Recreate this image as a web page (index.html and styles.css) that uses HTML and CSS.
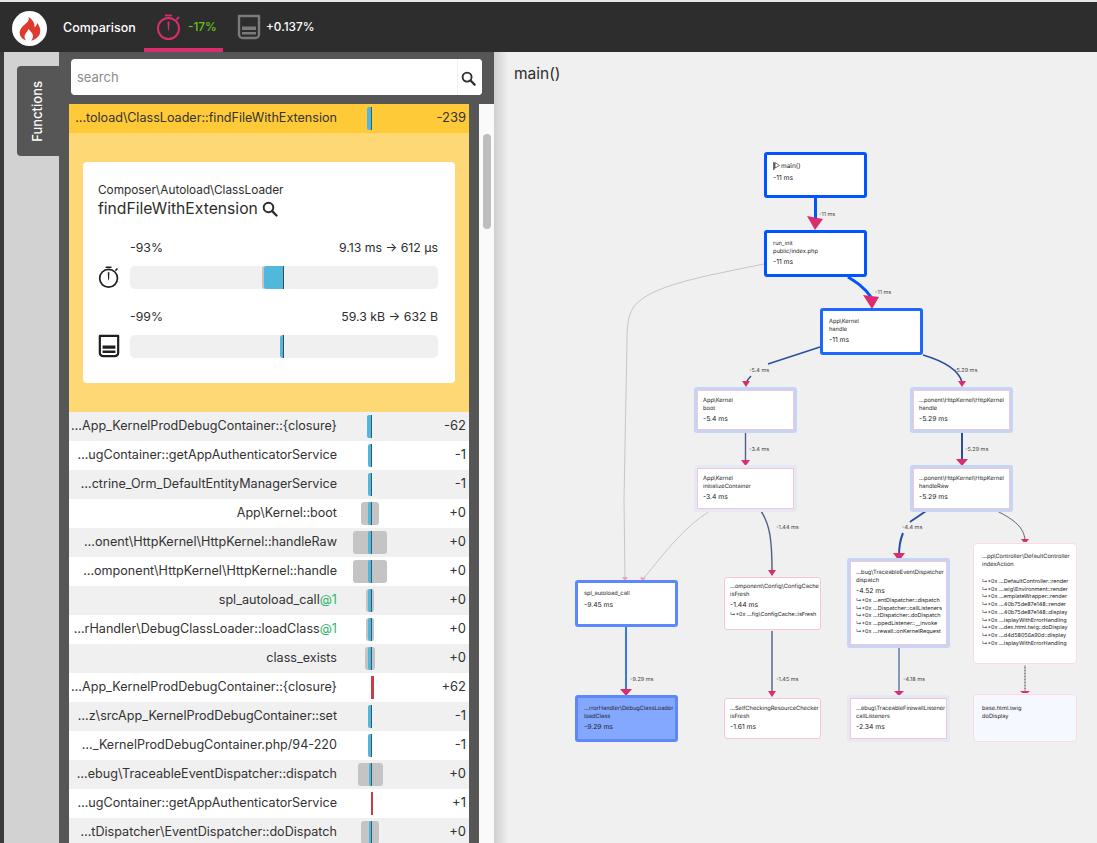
FILE: index.html

```html
<!DOCTYPE html>
<html lang="en">
<head>
  <meta charset="UTF-8" />
  <meta name="viewport" content="width=device-width, initial-scale=1.0" />
  <title>Comparison</title>
  <link rel="stylesheet" href="styles.css">
</head>
<body>
  <svg class="defs" width="0" height="0">
    <symbol id="i-timer" viewBox="0 0 26 26">
      <circle cx="12.500" cy="14.500" r="10.500" fill="none" stroke="currentColor" stroke-width="2"/>
      <path d="M9 1.500h7" fill="none" stroke="currentColor" stroke-width="1.800"/>
      <path d="M20.500 5.500l2.500-2.500" fill="none" stroke="currentColor" stroke-width="1.800"/>
      <path d="M11.500 7.500h2l-.4 7.500-.6 2.500-.6-2.500z" fill="currentColor"/>
    </symbol>
    <symbol id="i-memory" viewBox="0 0 24 26">
      <path d="M2 2h20v18.500a3.500 3.500 0 0 1-3.500 3.500h-13a3.500 3.500 0 0 1-3.500-3.500z" fill="none" stroke="currentColor" stroke-width="2.400" stroke-linejoin="round"/>
      <path d="M5 12.500h14v3.500h-14zM5 18h14v2.500h-14z" fill="currentColor"/>
    </symbol>
    <symbol id="i-search" viewBox="0 0 16 16">
      <circle cx="6.500" cy="6.500" r="4.800" fill="none" stroke="currentColor" stroke-width="2"/>
      <path d="M10.200 10.200l4.300 4.300" fill="none" stroke="currentColor" stroke-width="2.400" stroke-linecap="round"/>
    </symbol>
  </svg>

  <header class="topbar">
    <div class="logo">
      <svg width="35" height="35" viewBox="0 0 35 35">
        <circle cx="17.500" cy="17.500" r="17.500" fill="#fff"/>
        <path d="M16.500 6C18 10 14 12 11 15C8 18 7 21 8 24C9 27 12 29 14 29.500C12 27 12 24 14 22C15 21 16 19 16.500 18C18 20 21 22 21 25C21 27 20 28.500 19 29.500C23 29 27 26 28 22C29 18 27 14 25 12C25 14 24 15.500 22.500 16C23 12 20 8 16.500 6Z" fill="#e0392e"/>
      </svg>
    </div>
    <span class="topbar-title">Comparison</span>
    <div class="metric-tab active">
      <svg class="tab-icon timer" width="26" height="26"><use href="#i-timer"/></svg>
      <span class="delta-good">-17%</span>
    </div>
    <div class="metric-tab">
      <svg class="tab-icon memory" width="24" height="26"><use href="#i-memory"/></svg>
      <span>+0.137%</span>
    </div>
  </header>

  <div class="workspace">
    <div class="edge-strip"></div>
    <nav class="rail">
      <div class="rail-tab"><span>Functions</span></div>
    </nav>

    <section class="sidebar">
      <div class="searchbar">
        <input class="search-input" type="text" placeholder="search" />
        <button class="search-btn"><svg width="15" height="15"><use href="#i-search"/></svg></button>
      </div>
      <div class="list-wrap">
        <div class="fn-list">
          <div class="row row-selected">
            <span class="row-name">…toload\ClassLoader::findFileWithExtension</span>
            <span class="row-bar"><i class="blue" style="left:30px;width:5px"></i></span>
            <span class="row-val">-239</span>
          </div>
          <div class="detail">
            <div class="card">
              <div class="card-ns">Composer\Autoload\ClassLoader</div>
              <div class="card-fn">findFileWithExtension <svg width="16" height="16"><use href="#i-search"/></svg></div>
              <div class="stat">
                <div class="stat-head"><span>-93%</span><span>9.13 ms → 612 µs</span></div>
                <div class="stat-body">
                  <svg class="stat-icon" width="22" height="24"><use href="#i-timer"/></svg>
                  <div class="track">
                    <i class="track-gray" style="left:132px;width:22px"></i>
                    <i class="track-blue" style="left:134px;width:19px"></i>
                    <i class="track-axis"></i>
                  </div>
                </div>
              </div>
              <div class="stat">
                <div class="stat-head"><span>-99%</span><span>59.3 kB → 632 B</span></div>
                <div class="stat-body">
                  <svg class="stat-icon" width="22" height="24"><use href="#i-memory"/></svg>
                  <div class="track">
                    <i class="track-blue" style="left:150px;width:3px"></i>
                    <i class="track-axis"></i>
                  </div>
                </div>
              </div>
            </div>
          </div>

          <div class="row">
            <span class="row-name">…App_KernelProdDebugContainer::{closure}</span>
            <span class="row-bar"><i class="blue" style="left:30px;width:5px"></i></span>
            <span class="row-val">-62</span>
          </div>
          <div class="row">
            <span class="row-name">…ugContainer::getAppAuthenticatorService</span>
            <span class="row-bar"><i class="blue" style="left:31px;width:4px"></i></span>
            <span class="row-val">-1</span>
          </div>
          <div class="row">
            <span class="row-name">…ctrine_Orm_DefaultEntityManagerService</span>
            <span class="row-bar"><i class="blue" style="left:31px;width:4px"></i></span>
            <span class="row-val">-1</span>
          </div>
          <div class="row">
            <span class="row-name">App\Kernel::boot</span>
            <span class="row-bar"><i class="gray" style="left:24px;width:18px"></i><i class="blue" style="left:31px;width:4px"></i></span>
            <span class="row-val">+0</span>
          </div>
          <div class="row">
            <span class="row-name">…onent\HttpKernel\HttpKernel::handleRaw</span>
            <span class="row-bar"><i class="gray" style="left:16px;width:34px"></i><i class="blue" style="left:31px;width:4px"></i></span>
            <span class="row-val">+0</span>
          </div>
          <div class="row">
            <span class="row-name">…omponent\HttpKernel\HttpKernel::handle</span>
            <span class="row-bar"><i class="gray" style="left:16px;width:34px"></i><i class="blue" style="left:31px;width:4px"></i></span>
            <span class="row-val">+0</span>
          </div>
          <div class="row">
            <span class="row-name">spl_autoload_call<em>@1</em></span>
            <span class="row-bar"><i class="gray" style="left:29px;width:8px"></i><i class="blue" style="left:31px;width:4px"></i></span>
            <span class="row-val">+0</span>
          </div>
          <div class="row">
            <span class="row-name">…rHandler\DebugClassLoader::loadClass<em>@1</em></span>
            <span class="row-bar"><i class="gray" style="left:29px;width:8px"></i><i class="blue" style="left:31px;width:4px"></i></span>
            <span class="row-val">+0</span>
          </div>
          <div class="row">
            <span class="row-name">class_exists</span>
            <span class="row-bar"><i class="gray" style="left:28px;width:10px"></i><i class="blue" style="left:31px;width:4px"></i></span>
            <span class="row-val">+0</span>
          </div>
          <div class="row">
            <span class="row-name">…App_KernelProdDebugContainer::{closure}</span>
            <span class="row-bar"><i class="red" style="left:34px;width:3px"></i></span>
            <span class="row-val">+62</span>
          </div>
          <div class="row">
            <span class="row-name">…z\srcApp_KernelProdDebugContainer::set</span>
            <span class="row-bar"><i class="blue" style="left:31px;width:4px"></i></span>
            <span class="row-val">-1</span>
          </div>
          <div class="row">
            <span class="row-name">…_KernelProdDebugContainer.php/94-220</span>
            <span class="row-bar"><i class="blue" style="left:31px;width:4px"></i></span>
            <span class="row-val">-1</span>
          </div>
          <div class="row">
            <span class="row-name">…ebug\TraceableEventDispatcher::dispatch</span>
            <span class="row-bar"><i class="gray" style="left:21px;width:25px"></i><i class="blue" style="left:32px;width:3px"></i></span>
            <span class="row-val">+0</span>
          </div>
          <div class="row">
            <span class="row-name">…ugContainer::getAppAuthenticatorService</span>
            <span class="row-bar"><i class="red" style="left:34px;width:2px"></i></span>
            <span class="row-val">+1</span>
          </div>
          <div class="row">
            <span class="row-name">…tDispatcher\EventDispatcher::doDispatch</span>
            <span class="row-bar"><i class="gray" style="left:24px;width:18px"></i><i class="blue" style="left:32px;width:3px"></i></span>
            <span class="row-val">+0</span>
          </div>
        </div>
        <div class="scrolltrack"><div class="scrollthumb"></div></div>
      </div>
    </section>

    <main class="graph-panel">
      <h2 class="graph-title">main()</h2>
      <div class="canvas">
        <!-- edges use page coordinates, hence the viewBox -->
        <svg class="edges" width="603" height="791" viewBox="494 52 603 791">
          <path class="e e-hot" d="M815.500 198V218"/>
          <polygon class="tip" points="807,216 823,219 815,230"/>
          <path class="e e-hot" d="M848 277C856 282 864 287 871 297"/>
          <polygon class="tip" points="863,295 879,297 872,309"/>

          <path class="e e-gray" d="M764 264C700 277 655 285 636 304C629 312 627 322 627 340L624 500L625 578"/>
          <path class="e e-gray" d="M710 511C685 526 665 552 644 578"/>
          <polygon class="tip-pale" points="622,577 628,577 625,581"/>
          <polygon class="tip-pale" points="640,577 646,578 642,581"/>

          <path class="e e-navy" d="M820 347L768 364"/>
          <path class="e e-navy" d="M751 376C749 378 747 380 746 383"/>
          <polygon class="tip" points="742,381 750,381 746,387"/>
          <path class="e e-navy" d="M923 355C940 360 958 368 962 382"/>
          <polygon class="tip" points="958,381 966,381 962,387"/>

          <path class="e e-slate" d="M745.500 433V460"/>
          <polygon class="tip" points="741,460 750,460 745.500,466"/>
          <path class="e e-slate" d="M761 511C770 525 772 540 772 571"/>
          <polygon class="tip" points="768,570 776,570 772,576"/>
          <path class="e e-slate" d="M772 631V692"/>
          <polygon class="tip" points="768,691 776,691 772,697"/>

          <path class="e e-blue" d="M626 627V690"/>
          <polygon class="tip" points="620,689 632,689 626,696"/>

          <path class="e e-navy2" d="M962 433V460"/>
          <polygon class="tip" points="956,459 968,459 962,466"/>
          <path class="e e-navy2" d="M926 511C919 516 914 519 910 522"/>
          <path class="e e-navy2" d="M903 533C900 540 899 546 899 556"/>
          <polygon class="tip" points="893,553 905,553 899,561"/>
          <path class="e e-slate1" d="M997 511C1015 520 1024 528 1025 540"/>
          <polygon class="tip" points="1021,539 1029,539 1025,544"/>
          <path class="e e-mid" d="M899 648V692"/>
          <polygon class="tip" points="894,691 904,691 899,696"/>
          <path class="e e-dash" d="M1025 664V692"/>
          <polygon class="tip" points="1020,691 1030,691 1025,695"/>

          <text class="edge-label" x="819" y="216">-11 ms</text>
          <text class="edge-label" x="875" y="294">-11 ms</text>
          <text class="edge-label" x="749" y="372">-5.4 ms</text>
          <text class="edge-label" x="954" y="372">-5.29 ms</text>
          <text class="edge-label" x="749" y="451">-3.4 ms</text>
          <text class="edge-label" x="965" y="451">-5.29 ms</text>
          <text class="edge-label" x="776" y="529">-1.44 ms</text>
          <text class="edge-label" x="902" y="529">-4.4 ms</text>
          <text class="edge-label" x="630" y="681">-9.29 ms</text>
          <text class="edge-label" x="776" y="681">-1.45 ms</text>
          <text class="edge-label" x="903" y="681">-4.18 ms</text>
        </svg>

        <div class="node hot n-main">
          <div class="nm nm-flag"><svg width="7" height="8" viewBox="0 0 7 8"><path d="M.5 0v8M1.500 .5v7M2 .5L6.500 3.500 2 6z" fill="none" stroke="#333" stroke-width=".7"/></svg>main()</div>
          <div class="tm">-11 ms</div>
        </div>
        <div class="node hot n-run">
          <div class="nm">run_init</div><div class="nm">public/index.php</div>
          <div class="tm">-11 ms</div>
        </div>
        <div class="node hot2 n-handle">
          <div class="nm">App\Kernel</div><div class="nm">handle</div>
          <div class="tm">-11 ms</div>
        </div>
        <div class="node mid n-boot">
          <div class="nm">App\Kernel</div><div class="nm">boot</div>
          <div class="tm">-5.4 ms</div>
        </div>
        <div class="node pale n-init">
          <div class="nm">App\Kernel</div><div class="nm">initializeContainer</div>
          <div class="tm">-3.4 ms</div>
        </div>
        <div class="node mid n-khandle">
          <div class="nm">…ponent\HttpKernel\HttpKernel</div><div class="nm">handle</div>
          <div class="tm">-5.29 ms</div>
        </div>
        <div class="node mid n-raw">
          <div class="nm">…ponent\HttpKernel\HttpKernel</div><div class="nm">handleRaw</div>
          <div class="tm">-5.29 ms</div>
        </div>
        <div class="node strong n-spl">
          <div class="nm">spl_autoload_call</div>
          <div class="tm tm-single">-9.45 ms</div>
        </div>
        <div class="node strong filled n-load">
          <div class="nm">…rrorHandler\DebugClassLoader</div><div class="nm">loadClass</div>
          <div class="tm">-9.29 ms</div>
        </div>
        <div class="node thin n-config">
          <div class="nm">…omponent\Config\ConfigCache</div><div class="nm">isFresh</div>
          <div class="tm">-1.44 ms</div>
          <div class="st">↳+0x …fig\ConfigCache::isFresh</div>
        </div>
        <div class="node thin n-self">
          <div class="nm">…SelfCheckingResourceChecker</div><div class="nm">isFresh</div>
          <div class="tm">-1.61 ms</div>
        </div>
        <div class="node mid n-dispatch">
          <div class="nm">…bug\TraceableEventDispatcher</div><div class="nm">dispatch</div>
          <div class="tm">-4.52 ms</div>
          <div class="st">↳+0x …entDispatcher::dispatch</div>
          <div class="st">↳+0x …Dispatcher::callListeners</div>
          <div class="st">↳+0x …tDispatcher::doDispatch</div>
          <div class="st">↳+0x …ppedListener::__invoke</div>
          <div class="st">↳+0x …rewall::onKernelRequest</div>
        </div>
        <div class="node pale n-firewall">
          <div class="nm">…ebug\TraceableFirewallListener</div><div class="nm">callListeners</div>
          <div class="tm">-2.34 ms</div>
        </div>
        <div class="node ghost n-default">
          <div class="nm">…pp\Controller\DefaultController</div><div class="nm">indexAction</div>
          <div class="st-list">
            <div class="st">↳+0x …DefaultController::render</div>
            <div class="st">↳+0x …wig\Environment::render</div>
            <div class="st">↳+0x …emplateWrapper::render</div>
            <div class="st">↳+0x …40b75de87e148::render</div>
            <div class="st">↳+0x …40b75de87e148::display</div>
            <div class="st">↳+0x …isplayWithErrorHandling</div>
            <div class="st">↳+0x …dex.html.twig::doDisplay</div>
            <div class="st">↳+0x …d4d58056a90d::display</div>
            <div class="st">↳+0x …isplayWithErrorHandling</div>
          </div>
        </div>
        <div class="node ghost tinted n-base">
          <div class="nm">base.html.twig</div><div class="nm">doDisplay</div>
        </div>
      </div>
    </main>
  </div>
</body>
</html>
```

FILE: styles.css

```css
* {
  box-sizing: border-box;
}
html, body {
  height: 100%;
}
body {
  margin: 0;
  font-family: Inter, "Noto Sans", sans-serif;
  color: #2d2d2d;
  display: flex;
  flex-direction: column;
  overflow: hidden;
  background: #f0f0f0;
}
.defs {
  position: absolute;
}

/* top bar */
.topbar {
  height: 52px;
  flex: none;
  border-top: 2px solid #e6e6e6;
  background: #2d2d2d;
  color: #fff;
  display: flex;
  align-items: center;
  padding-left: 12px;
  font-size: 12.500px;
  font-weight: 500;
}
.logo {
  width: 35px;
  height: 35px;
  margin-top: 3px;
}
.topbar-title {
  width: 72px;
  margin-left: 16px;
  margin-right: 9px;
  white-space: nowrap;
}
.metric-tab {
  height: 50px;
  width: 79px;
  display: flex;
  align-items: center;
  gap: 6px;
  padding: 3px 0 0 12px;
  border-bottom: 4px solid transparent;
  font-size: 11.800px;
}
.metric-tab + .metric-tab {
  margin-left: 1px;
  width: auto;
  gap: 5px;
  padding-left: 13px;
}
.metric-tab.active {
  border-bottom-color: #d92d6e;
}
.timer {
  color: #d92d6e;
}
.memory {
  color: #7a7a7a;
}
.delta-good {
  color: #68c21a;
}

/* main area */
.workspace {
  flex: 1;
  min-height: 0;
  display: flex;
}
.edge-strip {
  width: 4px;
  background: #3a3a3a;
}
.rail {
  width: 55px;
  background: #d2d2d2;
  padding: 14px 0 0 13px;
}
.rail-tab {
  height: 90px;
  background: #565656;
  border-radius: 4px 0 0 4px;
  color: #fff;
  display: flex;
  align-items: center;
  justify-content: center;
  padding-right: 2px;
}
.rail-tab span {
  writing-mode: vertical-rl;
  transform: rotate(180deg);
  font-size: 13px;
  font-weight: 500;
}

.sidebar {
  width: 435px;
  background: #565656;
  display: flex;
  flex-direction: column;
  min-height: 0;
}
.searchbar {
  margin: 7px 12px 0 12px;
  height: 36px;
  flex: none;
  background: #fff;
  border-radius: 4px;
  display: flex;
  overflow: hidden;
}
.search-input {
  flex: 1;
  border: 0;
  outline: 0;
  padding: 0 6px;
  font: inherit;
  font-size: 13px;
  background: transparent;
}
.search-input::placeholder {
  color: #8c8c8c;
}
.search-btn {
  width: 25px;
  border: 0;
  border-left: 1px solid #f2f2f2;
  background: #fff;
  color: #2d2d2d;
  padding: 3px 4px 0 0;
  display: flex;
  align-items: center;
  justify-content: center;
}
.list-wrap {
  flex: 1;
  min-height: 0;
  margin: 9px 0 0 10px;
  display: flex;
  justify-content: space-between;
}
.fn-list {
  width: 400px;
  overflow: hidden;
}
.scrolltrack {
  width: 15px;
  background: #fafafa;
  padding: 30px 3px 0 4px;
}
.scrollthumb {
  width: 8px;
  height: 95px;
  border-radius: 4px;
  background: #bebebe;
}

.row {
  height: 29px;
  display: flex;
  align-items: center;
  background: #fff;
  font-size: 12.600px;
}
.row:nth-child(odd) {
  background: #f0f0f0;
}
.row.row-selected {
  background: #ffca38;
}
.row-name {
  width: 268px;
  padding-bottom: 3px;
  text-align: right;
  white-space: nowrap;
  color: #333;
}
.row-name em {
  font-style: normal;
  color: #2fb56a;
}
.row-bar {
  position: relative;
  width: 95px;
  height: 23px;
}
.row-bar i {
  position: absolute;
  top: 0;
  bottom: 0;
}
.row-bar .gray {
  background: #c4c4c4;
  border-radius: 3px;
}
.row-bar .blue {
  background: #4fb8dc;
  border-radius: 2px 0 0 2px;
  border-right: 1px solid #3d5a6a;
}
.row-bar .red {
  background: #cc3b44;
}
.row-val {
  width: 35px;
  padding: 0 1px 3px 0;
  text-align: right;
  font-size: 13px;
  color: #333;
}

.detail {
  height: 279px;
  background: #ffd876;
  padding: 29px 14px 0 14px;
}
.card {
  height: 221px;
  background: #fff;
  border-radius: 4px;
  padding: 21px 17px 0 15px;
}
.card-ns {
  font-size: 11.800px;
  line-height: 15px;
}
.card-fn {
  font-size: 15.700px;
  font-weight: 400;
  line-height: 22px;
  display: flex;
  align-items: center;
  gap: 4px;
}
.stat {
  margin-top: 20px;
}
.stat-head {
  margin-left: 32px;
  display: flex;
  justify-content: space-between;
  font-size: 12.300px;
  line-height: 16px;
}
.stat-body {
  display: flex;
  align-items: center;
  gap: 10px;
  margin-top: 9px;
}
.stat-icon {
  color: #1f1f1f;
  flex: none;
}
.track {
  position: relative;
  flex: 1;
  height: 23px;
  border-radius: 5px;
  background: #f0f0f0;
}
.track i {
  position: absolute;
  top: 0;
  bottom: 0;
}
.track-gray {
  background: #c4c4c4;
  border-radius: 3px 0 0 3px;
}
.track-blue {
  background: #4fb8dc;
  border-radius: 3px 0 0 3px;
}
.track-axis {
  left: 153px;
  width: 1px;
  background: #3b4a55;
}

/* graph */
.graph-panel {
  flex: 1;
  position: relative;
  background: linear-gradient(to right, #cfcfcf, #efefef 14px, #f0f0f0 22px);
  overflow: hidden;
}
.graph-title {
  margin: 12px 0 0 20px;
  font-size: 15.500px;
  font-weight: 400;
  line-height: 20px;
}
.canvas {
  position: absolute;
  left: 0;
  top: 0;
  width: 603px;
  height: 791px;
  text-rendering: geometricPrecision;
}
.edges {
  position: absolute;
  left: 0;
  top: 0;
}
.e {
  fill: none;
}
.e-hot { stroke: #0055ff; stroke-width: 3; }
.e-gray { stroke: #c6c6c6; stroke-width: 1; }
.e-navy { stroke: #2a4f9f; stroke-width: 1.500; }
.e-navy2 { stroke: #2a4f9f; stroke-width: 2; }
.e-slate { stroke: #4f5f85; stroke-width: 1.400; }
.e-slate1 { stroke: #55617a; stroke-width: 1; }
.e-blue { stroke: #0c55e6; stroke-width: 1.600; }
.e-mid { stroke: #46689f; stroke-width: 1.300; }
.e-dash { stroke: #777; stroke-width: 1.500; stroke-dasharray: 1 .5; }
.tip { fill: #d92d6e; }
.tip-pale { fill: #eaa2bd; }
.edge-label {
  font-size: 5.500px;
  fill: #444;
}

.node {
  position: absolute;
  background: #fff;
  border: 3px solid #ccc;
  border-radius: 3px;
  padding: 7px 0 0 6px;
  white-space: nowrap;
  color: #222;
  box-shadow: inset 0 0 0 1px #efc6dc;
}
.nm {
  font-size: 5.700px;
  line-height: 8px;
}
.tm {
  font-size: 6.800px;
  line-height: 8px;
  margin-top: 2px;
}
.tm-single {
  margin-top: 3px;
}
.st {
  font-size: 5.500px;
  line-height: 7.700px;
}
.tm + .st {
  margin-top: 3px;
}
.hot {
  border-color: #0055ff;
  box-shadow: none;
}
.hot2 {
  border-color: #1f66ff;
  box-shadow: none;
}
.strong {
  border-color: #5c88fb;
  border-width: 3.500px;
  box-shadow: none;
}
.mid {
  border-color: #c6d4f5;
}
.pale {
  border-color: #e4e9f4;
}
.thin, .ghost {
  border: 1px solid #f4c4da;
  box-shadow: 0 0 0 1px #f5eff3;
  padding: 5px 0 0 5px;
}
.ghost {
  border-color: #f8dbe7;
  border-radius: 4px;
  padding: 10px 0 0 8px;
}
.filled {
  background: #84a8ff;
}
.tinted {
  background: #f5f8ff;
}
.nm-flag {
  display: flex;
  align-items: center;
  gap: 1px;
  font-size: 6.500px;
  line-height: 12px;
  margin-top: -2px;
}
.st-list {
  margin-top: 10px;
}

/* node places on the canvas */
.n-main { left: 270px; top: 100px; width: 103px; height: 46px; }
.n-run { left: 270px; top: 178px; width: 103px; height: 47px; }
.n-handle { left: 326px; top: 256px; width: 103px; height: 47px; }
.n-boot { left: 200px; top: 335px; width: 103px; height: 46px; }
.n-init { left: 200px; top: 413px; width: 103px; height: 47px; }
.n-khandle { left: 416px; top: 335px; width: 103px; height: 46px; }
.n-raw { left: 416px; top: 413px; width: 103px; height: 47px; }
.n-spl { left: 81px; top: 528px; width: 103px; height: 47px; }
.n-load { left: 81px; top: 643px; width: 103px; height: 47px; }
.n-config { left: 230px; top: 525px; width: 97px; height: 53px; }
.n-self { left: 230px; top: 646px; width: 97px; height: 41px; padding-top: 6px; }
.n-dispatch { left: 353px; top: 506px; width: 103px; height: 90px; padding-top: 8px; }
.n-firewall { left: 353px; top: 643px; width: 103px; height: 47px; }
.n-default { left: 479px; top: 491px; width: 104px; height: 121px; padding-top: 9px; }
.n-base { left: 479px; top: 642px; width: 104px; height: 48px; }
```
